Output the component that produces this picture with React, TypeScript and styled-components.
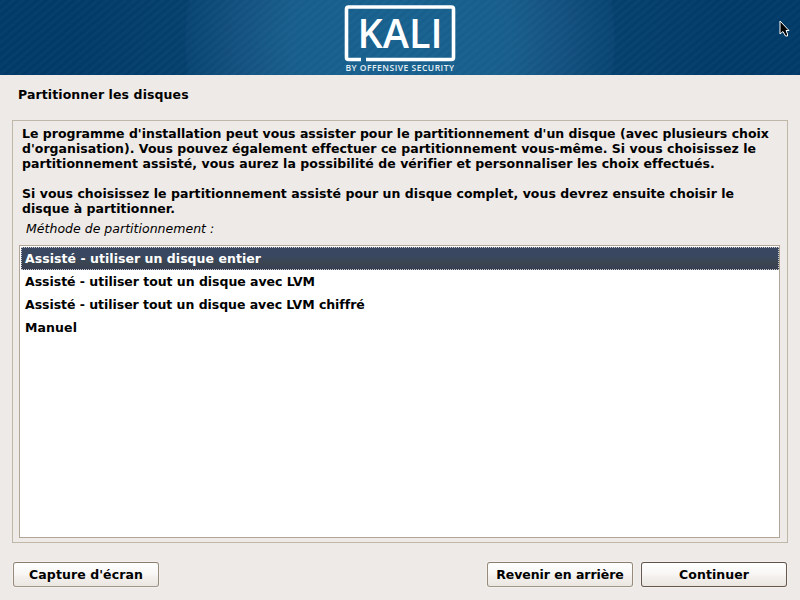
import React from "react";
import styled, { createGlobalStyle } from "styled-components";

const Global = createGlobalStyle`
  * { box-sizing: border-box; }
  body { margin: 0; background: #eeeae7; overflow: hidden; }
`;

const Screen = styled.div`
  position: relative;
  width: 800px;
  height: 600px;
  display: flex;
  flex-direction: column;
  background: #eeeae7;
  color: #000;
  font: bold 12.5px/15px "DejaVu Sans", sans-serif;
  cursor: default;
`;

const Banner = styled.header`
  height: 75px;
  flex: none;
  display: flex;
  justify-content: center;
  background:
    repeating-linear-gradient(140deg, rgba(255, 255, 255, 0) 0, rgba(255, 255, 255, 0.03) 3px, rgba(255, 255, 255, 0) 6px),
    radial-gradient(circle at 400px 40px, #16608e 0, #165d8b 110px, #124f7e 165px, #074472 213px, #033f6c 216px, #003967 330px);
`;

const Logo = styled.svg`
  display: block;
  width: 120px;
  height: 75px;
`;

const Cursor = styled.svg`
  position: absolute;
  left: 779px;
  top: 20px;
  width: 11px;
  height: 17px;
`;

const Title = styled.h1`
  margin: 12px 0 0 18px;
  height: 33px;
  font: inherit;
  letter-spacing: 0.1px;
`;

const Panel = styled.main`
  margin: 0 12px;
  height: 423px;
  flex: none;
  border: 1px solid #c1b7a8;
  padding: 5px 7px 4px 6px;
  display: flex;
  flex-direction: column;
`;

const Paragraph = styled.p`
  margin: 0 0 15px 3px;
  white-space: nowrap;

  &:last-of-type { margin-bottom: 0; }
`;

const Line = styled.span<{ $track: number }>`
  display: block;
  letter-spacing: ${({ $track }) => $track}px;
`;

const Question = styled.div`
  margin: 5px 0 9px 7px;
  font-weight: normal;
  font-style: italic;
  letter-spacing: 0.02px;
`;

const List = styled.ul`
  flex: 1;
  margin: 0;
  padding: 1px 0;
  list-style: none;
  background: #fff;
  border: 1px solid #b0a597;
`;

const Option = styled.li<{ $selected?: boolean; $track: number }>`
  height: 23px;
  margin: 0 0 0 1px;
  padding: 3px 3px;
  border: 1px dotted ${({ $selected }) => ($selected ? "#c6c8cc" : "transparent")};
  color: ${({ $selected }) => ($selected ? "#fff" : "#000")};
  letter-spacing: ${({ $track }) => $track}px;
  background: ${({ $selected }) =>
    $selected ? "linear-gradient(#3a4760 0 40%, #3a4550 70%, #383f54) border-box" : "none"};
`;

const Footer = styled.footer`
  display: flex;
  gap: 8px;
  padding: 19px 13px 0;
`;

const Button = styled.button<{ $primary?: boolean; $first?: boolean; $track: number }>`
  width: 146px;
  height: 25px;
  padding: 0;
  margin-right: ${({ $first }) => ($first ? "auto" : "0")};
  font: inherit;
  letter-spacing: ${({ $track }) => $track}px;
  color: #000;
  border: 1px solid;
  border-color: ${({ $primary }) =>
    $primary ? "#5f5349 #655950 #62564d" : "#8a7d6c #968a7b #a1968a"};
  border-radius: 3px;
  background: linear-gradient(#fff, #f8f6f5 50%, #f3f0ed 60%, #ebe6e1);
  box-shadow: 0 0 0 1px rgba(255, 255, 255, 0.3);
`;

export default function App() {
  return (
    <Screen>
      <Global />
      <Banner>
        <Logo viewBox="340 0 120 75" aria-label="Kali">
          <path
            d="M361 59.500H348.500Q346.500 59.500 346.500 57.500V9Q346.500 7 348.500 7H451.500Q453.500 7 453.500 9V57.500Q453.500 59.500 451.500 59.500H366"
            fill="none"
            stroke="#fff"
            strokeWidth="3.600"
          />
          <text x="357.500" y="47.700" fill="#fff" fontFamily="'Open Sans', sans-serif" fontSize="39.200" fontWeight="600" textLength="85" lengthAdjust="spacingAndGlyphs">KALI</text>
          <text x="345.500" y="71" fill="#e6eff4" fontFamily="'Open Sans', sans-serif" fontSize="8.600" fontWeight="600" textLength="109" lengthAdjust="spacingAndGlyphs" letterSpacing="0.500">BY OFFENSIVE SECURITY</text>
        </Logo>
      </Banner>
      <Title>Partitionner les disques</Title>
      <Panel>
        <Paragraph>
          <Line $track={0}>Le programme d'installation peut vous assister pour le partitionnement d'un disque (avec plusieurs choix</Line>
          <Line $track={0.02}>d'organisation). Vous pouvez également effectuer ce partitionnement vous-même. Si vous choisissez le</Line>
          <Line $track={0.05}>partitionnement assisté, vous aurez la possibilité de vérifier et personnaliser les choix effectués.</Line>
        </Paragraph>
        <Paragraph>
          <Line $track={0.04}>Si vous choisissez le partitionnement assisté pour un disque complet, vous devrez ensuite choisir le</Line>
          <Line $track={0.04}>disque à partitionner.</Line>
        </Paragraph>
        <Question>Méthode de partitionnement :</Question>
        <List>
          <Option $selected $track={0.04}>Assisté - utiliser un disque entier</Option>
          <Option $track={-0.03}>Assisté - utiliser tout un disque avec LVM</Option>
          <Option $track={-0.04}>Assisté - utiliser tout un disque avec LVM chiffré</Option>
          <Option $track={0.1}>Manuel</Option>
        </List>
      </Panel>
      <Footer>
        <Button $first $track={0.08}>Capture d'écran</Button>
        <Button $track={-0.04}>Revenir en arrière</Button>
        <Button $primary $track={0.05}>Continuer</Button>
      </Footer>
      <Cursor viewBox="0 0 11 17">
        <path d="M1 1V14L4 11.500L6.500 16H8.500V14L7 10.500H10Z" fill="#000" stroke="#fff" strokeWidth="1" />
      </Cursor>
    </Screen>
  );
}
